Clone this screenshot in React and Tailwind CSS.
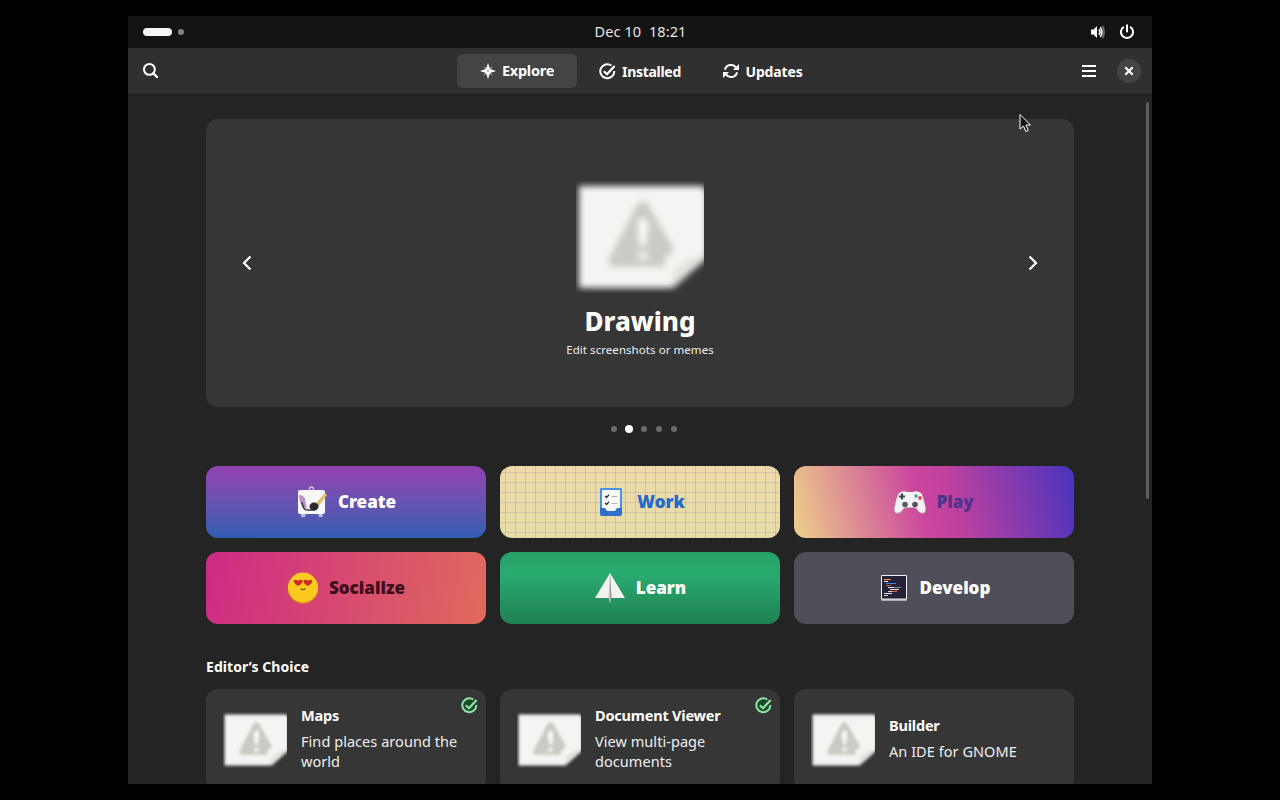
import React, { useState } from 'react';

const SearchIcon = () => (
  <svg width="16" height="16" viewBox="0 0 16 16" fill="none" stroke="#fff" strokeWidth="2">
    <circle cx="6.4" cy="6.4" r="5.4" />
    <path d="M10.4 10.4 14 14" strokeWidth="2.4" strokeLinecap="round" />
  </svg>
);

const ExploreIcon = () => (
  <svg width="16" height="16" viewBox="0 0 16 16" fill="#fff">
    <path d="M3 3 7 5.500 5.500 7ZM13 3 9 5.500 10.500 7ZM3 13 7 10.500 5.500 9ZM13 13 9 10.500 10.500 9Z" opacity="0.45" />
    <path
      d="M8 0 10 6 16 8 10 10 8 16 6 10 0 8 6 6ZM8 7.200a.8.8 0 1 0 0 1.600.8.8 0 0 0 0-1.600Z"
      fillRule="evenodd"
    />
  </svg>
);

const CheckIcon = ({ color = '#fff', fill = 'none' }) => (
  <svg width="17" height="17" viewBox="0 0 17 17" fill="none" stroke={color} strokeWidth="2">
    <path d="M12.4 2.5A7 7 0 1 0 15.3 8" fill={fill} />
    <path d="M4.8 8.2 8 11.2 15.6 3" strokeWidth="2.2" />
  </svg>
);

const UpdatesIcon = () => (
  <svg width="16" height="16" viewBox="0 0 16 16" fill="none" stroke="#fff" strokeWidth="2">
    <path d="M2 6.8A6.1 6.1 0 0 1 13 4.6M14 9.2A6.1 6.1 0 0 1 3 11.4" />
    <path d="M16 1v6h-6ZM0 15V9h6Z" fill="#fff" stroke="none" />
  </svg>
);

const VolumeIcon = () => (
  <svg width="16" height="16" viewBox="0 0 16 16" fill="none" stroke="#fff">
    <path d="M2 5.500h2.500L8 2v12L4.500 10.500H2Z" fill="#fff" stroke="none" />
    <path d="M9.800 5.400c1.500 1.600 1.500 3.600 0 5.200" strokeWidth="1.600" />
    <path d="M11.200 3.200c2.400 2.600 2.400 7 0 9.600" strokeWidth="1.600" />
    <path d="M13.200 1.800c2.600 3.400 2.600 9 0 12.400" strokeWidth="1.600" opacity="0.4" />
  </svg>
);

const PowerIcon = () => (
  <svg width="16" height="16" viewBox="0 0 16 16" fill="none" stroke="#fff" strokeWidth="2">
    <path d="M4.800 2.800a6.100 6.100 0 1 0 6.400 0" />
    <path d="M8 1.200V7.500" strokeLinecap="round" />
  </svg>
);

const Chevron = ({ flip }) => (
  <svg width="16" height="16" viewBox="0 0 16 16" fill="none" stroke="#fff" strokeWidth="2.2">
    <path d={flip ? 'M4.5 1.5 11 8 4.5 14.5' : 'M11.5 1.5 5 8 11.5 14.5'} />
  </svg>
);

const MissingImage = ({ id, className }) => (
  <svg className={className} viewBox="0 0 128 112">
    <defs>
      <filter id={id} x="-10%" y="-10%" width="120%" height="120%">
        <feGaussianBlur stdDeviation="3" />
      </filter>
    </defs>
    <g filter={`url(#${id})`}>
      <path d="M3 5H127L131 11V77L97 107H3Z" fill="#f5f4f2" />
      <path d="M130 76L99 105H93L98 90Q110 76 130 74Z" fill="#e2e2de" />
      <path d="M67 20Q72 20 75 28L97 66Q98 75 90 75L88 86H39Q29 85 34 75L58 29Q62 20 67 20Z" fill="#cbcac5" />
      <path d="M67 37Q72 37 72 46L70 64H64L62 46Q62 37 67 37Z" fill="#fbfaf6" />
      <circle cx="67" cy="75" r="5" fill="#efeee8" />
    </g>
  </svg>
);

const CreateIcon = () => (
  <svg width="32" height="32" viewBox="0 0 32 32">
    <circle cx="15.500" cy="3" r="2" fill="none" stroke="#cfc4e4" strokeWidth="1.400" />
    <path d="M5 27h5l-1 4H5ZM22 27h4l1 4h-4Z" fill="#b8bddc" />
    <rect x="2" y="4" width="27" height="24" rx="2" fill="#f8f7fa" />
    <path d="M3 9q5 0 6 4 1 6 2 9l-4-1q-4-5-4-12Z" fill="#b794c6" />
    <path d="M6 16q1 8 5 8h8" fill="none" stroke="#3d3846" strokeWidth="1.600" />
    <path d="M19 18 29 7l2 2-9 12Z" fill="#dfbd69" />
    <ellipse cx="18" cy="20.500" rx="4.500" ry="4" fill="#29272f" />
  </svg>
);

const WorkIcon = () => (
  <svg width="32" height="32" viewBox="0 0 32 32">
    <rect x="5" y="2" width="22" height="28" rx="2" fill="#2d6fca" />
    <rect x="5" y="2" width="22" height="20" rx="2" fill="#4a90e4" />
    <path d="M7 4h18v18h-3l-2 3h-8l-2-3H7Z" fill="#fafafa" />
    <path d="m10 10 1.500 1.500L14 8.800M10 17l1.500 1.500L14 15.800" fill="none" stroke="#332f3b" strokeWidth="1.300" />
    <path d="M16.500 10.500h6M16.500 17.500h6" stroke="#b5b3b8" strokeWidth="1" />
  </svg>
);

const PlayIcon = () => (
  <svg width="32" height="32" viewBox="0 0 32 32">
    <path d="M5 8q5-3 8-1h6q3-2 8 1 2 2 4.500 15 .4 5-3.500 4.500-3 0-5-4-1-1.500-3-1.500h-8q-2 0-3 1.500-2 4-5 4Q.1 28 .5 23 3 10 5 8Z" fill="#b9b5b8" />
    <path d="M5 7q5-3 8-1h6q3-2 8 1 2 2 4.500 15 .4 5-3.500 4.500-3 0-5-4-1-1.500-3-1.500h-8q-2 0-3 1.500-2 4-5 4Q.1 27 .5 22 3 9 5 7Z" fill="#f4f2f3" />
    <path d="M8 7.500v6M5 10.500h6" stroke="#3d4b4d" strokeWidth="2.200" />
    <circle cx="11" cy="18.500" r="2.800" fill="#5a5b63" />
    <circle cx="21" cy="18.500" r="2.800" fill="#5a4d5c" />
    <circle cx="22" cy="10" r="1.700" fill="#3c9a90" />
    <circle cx="26" cy="12" r="1.900" fill="#dd4a68" />
  </svg>
);

const SocializeIcon = () => (
  <svg width="32" height="32" viewBox="0 0 32 32">
    <circle cx="16" cy="16.500" r="15.200" fill="#d98a12" />
    <circle cx="16" cy="15.500" r="15" fill="#fbc920" />
    <path d="M11 14C4 10 7 6 11 8.800c4-2.800 8 1.200 0 5.200ZM21 14c-8-4-4-8 0-5.200 4-2.800 7 1.200 0 5.200Z" fill="#cf2c26" />
    <path d="M13.800 16.500q2.200 2.400 4.400 0" fill="none" stroke="#8f4d0c" strokeWidth="1.300" />
  </svg>
);

const LearnIcon = () => (
  <svg width="32" height="32" viewBox="0 0 32 32">
    <path d="M16 1 1 26h30Z" fill="#f3f2f1" />
    <path d="M16 1 14.500 26l1.500 5 1.500-5Z" fill="#c6c4c3" />
    <path d="M16 1v30l1.500-5Z" fill="#9c9a99" />
  </svg>
);

const DevelopIcon = () => (
  <svg width="32" height="32" viewBox="0 0 32 32">
    <rect x="3" y="3" width="26" height="26" rx="1.500" fill="#b0afb3" />
    <rect x="3" y="3" width="26" height="24.500" rx="1.500" fill="#f1f0f2" />
    <rect x="4" y="4" width="24" height="22.500" fill="#252138" />
    <path d="M6 7.500h7" stroke="#f0a050" />
    <path d="M6 9.500h4M10 15.500h6M12 17.500h9M6 21.500h8" stroke="#e9e7ed" />
    <path d="M8 11.500h10" stroke="#3d86e4" />
    <path d="M8 13.500h5M14 19.500h5" stroke="#e0655f" />
    <path d="M16 15.500h7" stroke="#8f8c9d" />
    <path d="M10 19.500h4M6 23.500h4" stroke="#e5d9b4" />
  </svg>
);

const tabs = [
  { name: 'Explore', Icon: ExploreIcon, tracking: '-tracking-[0.25px]' },
  { name: 'Installed', Icon: CheckIcon, tracking: 'tracking-[-0.3px] text-[14px]' },
  { name: 'Updates', Icon: UpdatesIcon, tracking: 'tracking-[-0.15px] text-[14px]' },
];

const categories = [
  {
    name: 'Create',
    Icon: CreateIcon,
    tile: 'bg-linear-to-b from-[#9141b0] to-[#2c5db2] text-white',
  },
  {
    name: 'Work',
    Icon: WorkIcon,
    tile: 'bg-[#eadfa9] bg-[linear-gradient(#b5a6b070_1px,transparent_1px),linear-gradient(90deg,#b5a6b080_1px,transparent_1px),linear-gradient(#efd9ab,#e6dda6)] bg-size-[10px_10px,10px_10px,100%_100%] bg-position-[5px_6px,5px_6px,0_0] text-[#2169ca]',
  },
  {
    name: 'Play',
    Icon: PlayIcon,
    tile: 'bg-[linear-gradient(75deg,#edca8b_2%,#cb479e_45%,#c2419f_55%,#4e34bd_98%)] text-[#4d358b]',
  },
  {
    name: 'Socialize',
    Icon: SocializeIcon,
    tile: 'bg-[linear-gradient(100deg,#ce2c83_3%,#e0685e_97%)] text-[#3e0d1c]',
  },
  {
    name: 'Learn',
    Icon: LearnIcon,
    tile: 'bg-[linear-gradient(#26a269,#29ab70_30%,#1f8053)] text-white',
  },
  {
    name: 'Develop',
    Icon: DevelopIcon,
    tile: 'bg-[#504e58] text-white',
  },
];

const apps = [
  { name: 'Maps', summary: 'Find places around the world', installed: true },
  { name: 'Document Viewer', summary: 'View multi-page documents', installed: true },
  { name: 'Builder', summary: 'An IDE for GNOME', installed: false },
];

const App = () => {
  const [activeTab, setActiveTab] = useState('Explore');
  const [slide, setSlide] = useState(1);

  return (
    <div className="flex h-screen w-screen justify-center overflow-hidden bg-black py-4 font-['Noto_Sans',sans-serif] text-[14.5px] text-white">
      <div className="relative flex h-[768px] w-[1024px] flex-col overflow-hidden bg-[#242424]">
        <div className="grid h-8 shrink-0 grid-cols-3 items-center bg-[#131313] pr-[17px] pl-[15px]">
          <div className="flex items-center gap-1.5">
            <span className="h-2 w-[29px] rounded-full bg-[#f4f4f4]" />
            <span className="size-1.5 rounded-full bg-[#858585]" />
          </div>
          <p className="pl-[3px] text-center text-[14.5px] tracking-[0.1px] whitespace-pre text-[#e6e6e6]">Dec 10  18:21</p>
          <div className="flex items-center justify-end gap-3.5">
            <VolumeIcon />
            <PowerIcon />
          </div>
        </div>

        <header className="grid h-[47px] shrink-0 grid-cols-[1fr_366px_1fr] items-center border-b border-[#1e1e1e] bg-[#303030] pr-[11px] pl-[15px]">
          <button type="button" aria-label="Search">
            <SearchIcon />
          </button>
          <nav className="-ml-[2px] flex gap-[3px]">
            {tabs.map(({ name, Icon, tracking }) => (
              <button
                key={name}
                type="button"
                onClick={() => setActiveTab(name)}
                className={`flex h-[34px] w-[120px] shrink-0 items-center justify-center gap-1.5 rounded-md font-bold ${tracking} ${
                  activeTab === name ? 'bg-[#444444]' : ''
                }`}
              >
                <Icon />
                {name}
              </button>
            ))}
          </nav>
          <div className="flex items-center justify-end gap-[21px]">
            <button type="button" aria-label="Menu" className="flex w-3.5 flex-col gap-[3px]">
              <span className="h-0.5 bg-white" />
              <span className="h-0.5 bg-white" />
              <span className="h-0.5 bg-white" />
            </button>
            <button
              type="button"
              aria-label="Close"
              className="flex size-6 items-center justify-center rounded-full bg-[#444444]"
            >
              <svg width="10" height="10" viewBox="0 0 10 10" stroke="#fff" strokeWidth="2.2">
                <path d="m1.300 1.300 7.400 7.400M8.700 1.300 1.300 8.700" />
              </svg>
            </button>
          </div>
        </header>

        <main className="min-h-0 flex-1 overflow-hidden px-[78px] pt-6">
          <section className="flex h-72 items-center justify-between rounded-xl bg-[#363636] px-[33px]">
            <button type="button" aria-label="Previous" onClick={() => setSlide((slide + 4) % 5)}>
              <Chevron />
            </button>
            <div className="flex flex-col items-center pt-3">
              <MissingImage id="soft-hero" className="h-28 w-32" />
              <h1 className="mt-2.5 text-[26px] leading-9 font-extrabold">Drawing</h1>
              <p className="mt-[3px] text-[11.5px] leading-4 tracking-[0.06px] text-[#eeeeee]">
                Edit screenshots or memes
              </p>
            </div>
            <button type="button" aria-label="Next" onClick={() => setSlide((slide + 1) % 5)}>
              <Chevron flip />
            </button>
          </section>

          <div className="flex h-[59px] items-center justify-center gap-[7px] pb-[15px] pl-[7px]">
            {[0, 1, 2, 3, 4].map((dot) => (
              <span key={dot} className="flex size-2 items-center justify-center">
                <span className={`rounded-full ${dot === slide ? 'size-2 bg-white' : 'size-1.5 bg-[#6b6b6b]'}`} />
              </span>
            ))}
          </div>

          <section className="grid grid-cols-3 gap-3.5">
            {categories.map(({ name, Icon, tile }) => (
              <button
                key={name}
                type="button"
                className={`flex h-[72px] items-center justify-center gap-2.5 rounded-xl text-[17px] font-black ${tile}`}
              >
                <Icon />
                {name}
              </button>
            ))}
          </section>

          <h2 className="mt-8 text-[14px] leading-[22px] font-bold tracking-[0.05px]">Editor’s Choice</h2>

          <section className="mt-[11px] grid grid-cols-3 gap-3.5">
            {apps.map(({ name, summary, installed }, index) => (
              <article key={name} className="relative flex h-[102px] items-center gap-3.5 rounded-xl bg-[#363636] px-[17px]">
                <MissingImage id={`soft-${index}`} className="h-14 w-16 shrink-0" />
                <div className="w-[165px] pb-1">
                  <h3 className="text-[14.5px] leading-5 font-bold tracking-[-0.2px]">{name}</h3>
                  <p className="mt-1.5 text-[14.5px] leading-5 tracking-[0.05px] text-[#eeeeee]">{summary}</p>
                </div>
                {installed && (
                  <span className="absolute top-2 right-2">
                    <CheckIcon color="#8fe3a6" fill="#1d4a2c" />
                  </span>
                )}
              </article>
            ))}
          </section>
        </main>

        <div className="absolute top-[86px] right-[3px] h-[397px] w-[3px] rounded-full bg-[#5c5c5c]" />
        <svg className="absolute top-[97px] left-[891px]" width="13" height="20" viewBox="0 0 13 20">
          <path d="M1 1.500V16l3.500-3 2.300 5.500 2.500-1L7 12h4.500Z" fill="#111" stroke="#fff" strokeWidth="1" />
        </svg>
      </div>
    </div>
  );
};

export default App;
